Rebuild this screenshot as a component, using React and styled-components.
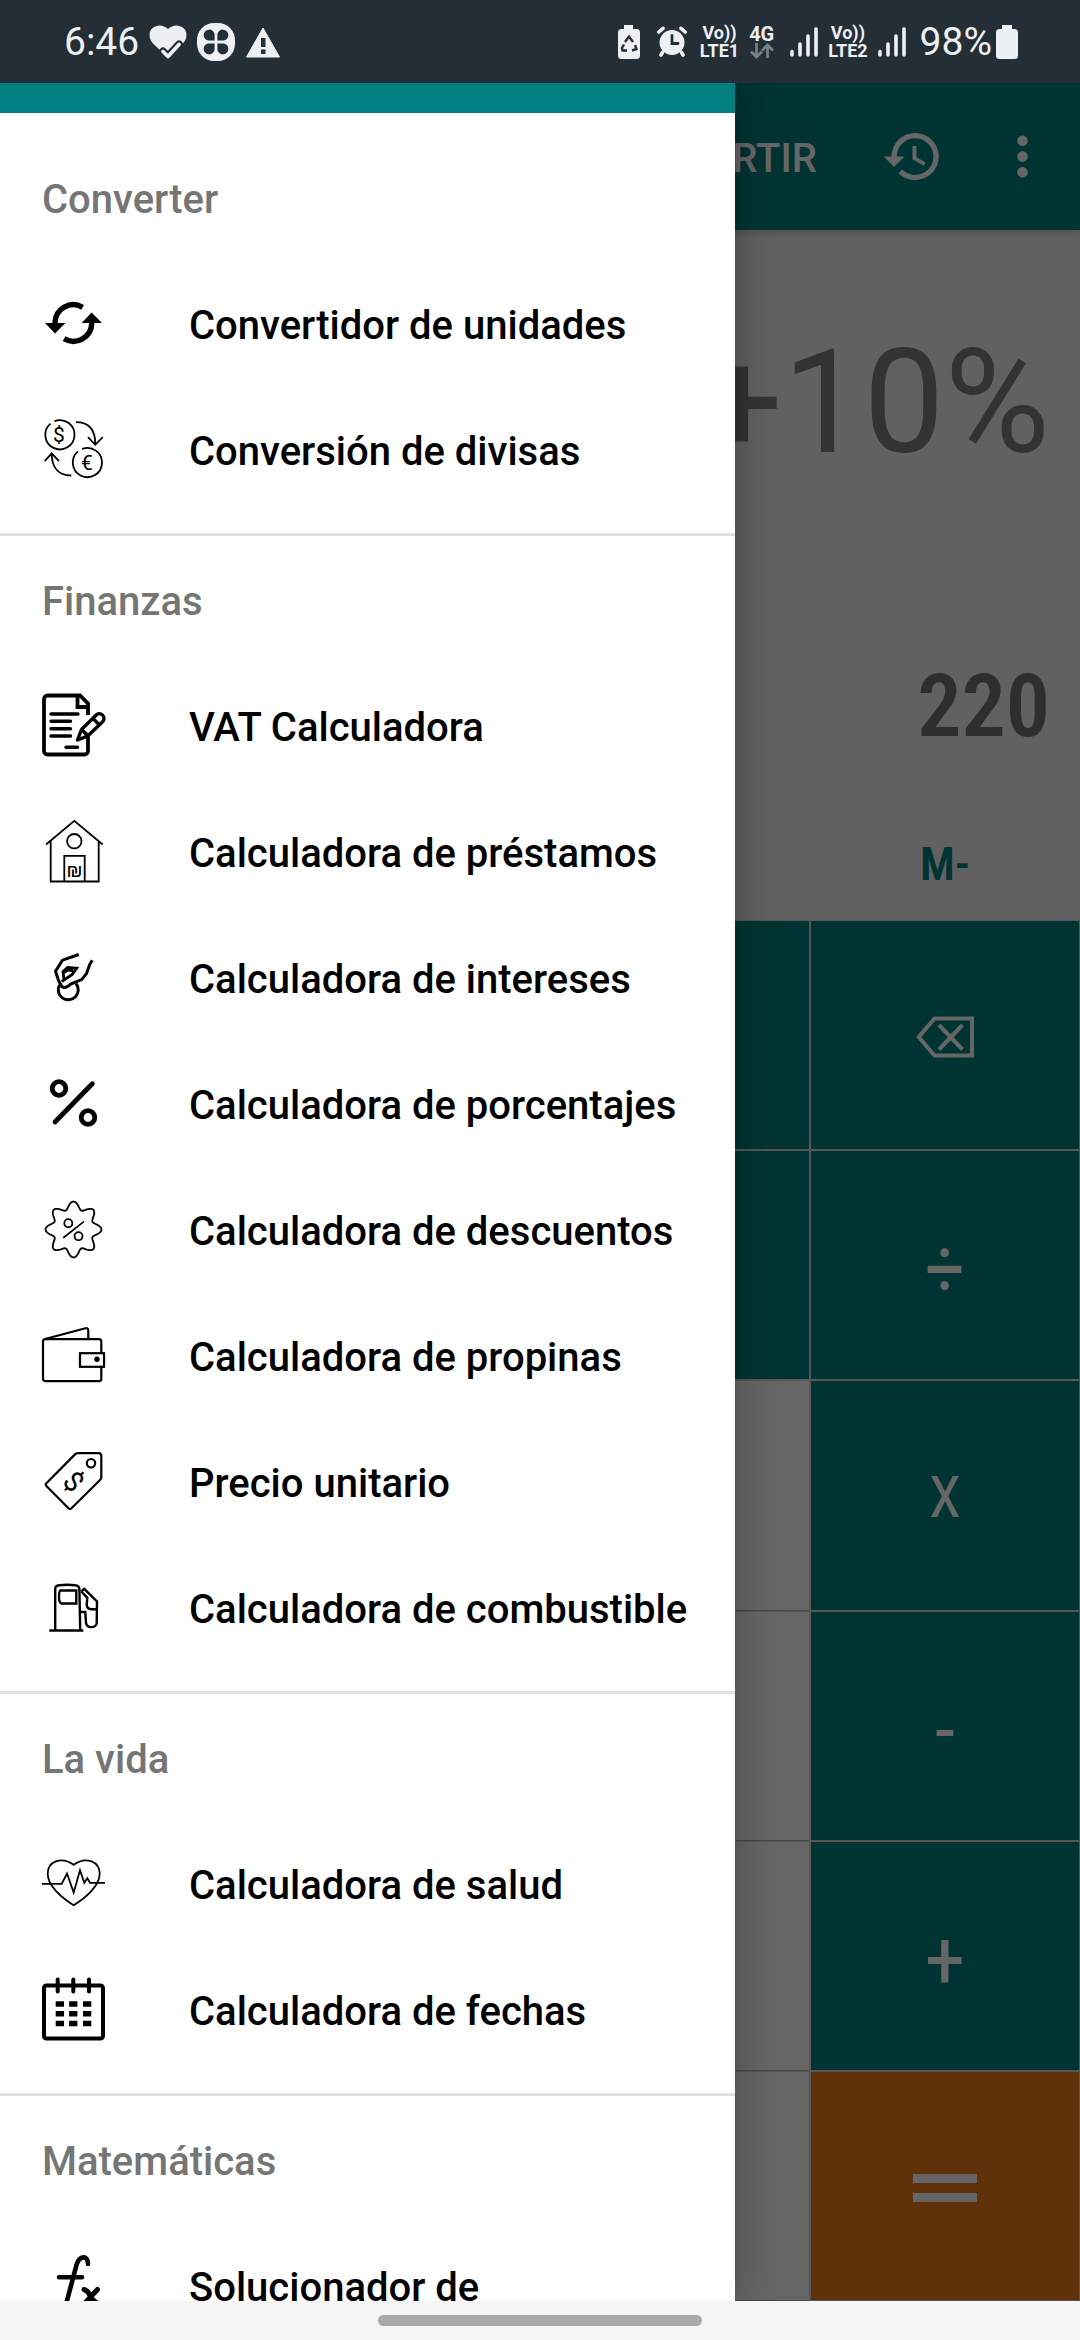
import React from 'react';
import styled, { createGlobalStyle } from 'styled-components';
import { MdHistory, MdMoreVert } from 'react-icons/md';

const IconText = styled.text.withConfig({ shouldForwardProp: (prop) => prop !== 'size' })`
    fill: #000;
    stroke: none;
    text-anchor: middle;
    font-size: ${props => props.size}px;
`

// wavy seal with eight tips
const sealPath = () => {
    const points = [];
    for (let i = 0; i < 96; i++) {
        const angle = (i / 96) * Math.PI * 2;
        const radius = 24.2 + 3.8 * Math.cos(angle * 8);
        points.push(`${(31.5 + radius * Math.sin(angle)).toFixed(2)} ${(31.5 - radius * Math.cos(angle)).toFixed(2)}`);
    }
    return `M${points.join('L')}Z`;
};

const icons = {
    units: (
        <>
            <path d="M13 31a18.3 18.3 0 0 1 27.6-15.7M49.7 31a18.3 18.3 0 0 1-27.6 15.7" strokeWidth="5.4" />
            <path d="M3 31h20.4L13 41.4zM39.6 31H60L49.6 20.6z" fill="#000" stroke="none" />
        </>
    ),
    currency: (
        <>
            <path d="M12.5 3.2a14.6 14.6 0 1 1-4 2.4M40 31a14.6 14.6 0 1 1-4 2.4" strokeWidth="1.8" />
            <path d="M34 4.2c12 0 19.3 7 19.3 22M46 19.2l7.3 7.6 7.4-7.6" strokeWidth="1.8" />
            <path d="M29.3 57.5c-12 0-19.6-7-19.6-22M2.7 43.2l7-7.8 7.3 7.8" strokeWidth="1.8" />
            <IconText x="17" y="24" size={21}>$</IconText>
            <IconText x="45" y="52" size={21}>€</IconText>
        </>
    ),
    vat: (
        <>
            <path d="M46 38v19a3.5 3.5 0 0 1-3.5 3.5h-37A3.5 3.5 0 0 1 2 57V5a3.5 3.5 0 0 1 3.5-3.5H38l8 8V21M35.5 2v11H46" strokeWidth="3.8" />
            <path d="M9 20h27M9 27.3h19.5M9 34.7h19.5M9 42h19.5M24 53.2h11.5" strokeWidth="3.4" strokeLinecap="round" />
            <path d="M35.5 46l4-10.5L54 21.2a4.6 4.6 0 0 1 6.6 6.5L46 41.8zM39.5 35.5l6.3 6M51 24.5l6.2 6.2" fill="#fff" strokeWidth="3.4" strokeLinejoin="round" />
        </>
    ),
    loan: (
        <>
            <path d="M4 24.5L32.3.8l28.4 23.7M8.7 21v40.5h48V21M22.3 61.5V35.8h20.4v25.7" strokeWidth="1.8" />
            <circle cx="32.3" cy="21.2" r="7.2" strokeWidth="1.8" />
            <IconText x="32.5" y="56.5" size={20}>₪</IconText>
        </>
    ),
    interest: (
        <>
            <path d="M36.7 8.5l-16.2 5.7-7 11 3 9.3 3.2 6c2 1.6 5 1.6 9-2.5l11-4.4 4.8-6 3.2-9 2.5-4.4" strokeWidth="3" />
            <path d="M22 33.5l-1-8 4.7-4 9 .8-4.5 6.2-10.5 7M21 27l5-3 5 1" strokeWidth="2.8" />
            <path d="M17.5 39a10 10 0 1 0 16.5-1.5" strokeWidth="3" />
        </>
    ),
    percent: (
        <>
            <circle cx="17" cy="16.5" r="6.8" strokeWidth="4.8" />
            <circle cx="46" cy="45.5" r="6.8" strokeWidth="4.8" />
            <path d="M50.3 11.8L13 50" strokeWidth="4.8" strokeLinecap="round" />
        </>
    ),
    discount: (
        <>
            <path d={sealPath()} strokeWidth="1.8" />
            <circle cx="26.3" cy="25.2" r="4" strokeWidth="1.8" />
            <circle cx="36.5" cy="38.2" r="4" strokeWidth="1.8" />
            <path d="M41.5 23.8L21.7 39.5" strokeWidth="1.6" strokeLinecap="round" />
        </>
    ),
    wallet: (
        <>
            <path d="M3 15L43.5 4.3c1.6-.4 2.8.4 2.8 2V15" strokeWidth="2.2" />
            <rect x="1" y="15.2" width="58.3" height="42" rx="2.5" strokeWidth="2.2" />
            <rect x="38" y="29.2" width="24" height="13.6" fill="#fff" strokeWidth="2.2" />
            <circle cx="55" cy="35.2" r="2.7" fill="#000" stroke="none" />
        </>
    ),
    tag: (
        <>
            <path d="M4.4 33.2L33 4.4q1.2-1.2 3-1.2h20.5q2.8 0 2.8 2.8v21q0 1.8-1.3 3L29.5 58.3q-1.5 1.5-3 0L4.4 36q-1.4-1.4 0-2.8z" strokeWidth="2.2" />
            <circle cx="49" cy="13.2" r="4.2" strokeWidth="2.2" />
            <g transform="rotate(45 31.5 31.5)">
                <IconText x="31.5" y="41" size={28}>$</IconText>
            </g>
        </>
    ),
    fuel: (
        <>
            <path d="M13.2 54.5V13c0-2.5 1.5-3.6 4-3.8q8-.8 16 0c2.6.2 4 1.3 4.2 4l.8 41.3M7.3 54.5h34" strokeWidth="2.4" />
            <path d="M18.5 14.5h15.8v13H19.5c-2-.6-2.5-2-2.5-6s0-6.5 1.5-7z" strokeWidth="2.4" />
            <path d="M39.3 15.5l3-2.7L55 25.5 54.7 47c-.2 5-9.7 6-10.7 0l-.7-11H39M39.3 15.5l6 6.3-.6 7.7q1 3.7 4 3.7h5.5" strokeWidth="2.4" />
        </>
    ),
    health: (
        <>
            <path d="M31.7 53.2C20 46 5.7 34 5.7 21.8c0-12 13.3-18 26-9 12.7-9 26-3 26 9 0 12.2-14.3 24.2-26 31.4z" strokeWidth="1.8" />
            <path d="M0 31.8h19.7L25 21.5l6.7 19L38 18.2l4.3 12.6 3-4.6 2.7 4.6h15" strokeWidth="1.8" />
        </>
    ),
    calendar: (
        <>
            <rect x="2" y="7.5" width="59" height="53" rx="2.5" strokeWidth="4" />
            <path d="M15.7 1.5v12M31.3 1.5v12M47 1.5v12" strokeWidth="4" strokeLinecap="round" />
            <path d="M13.7 26H22m5.1 0h8.3m5.6 0h8.3M13.7 35.8H22m5.1 0h8.3m5.6 0h8.3M13.7 45.5H22m5.1 0h8.3m5.6 0h8.3" strokeWidth="5.6" />
        </>
    ),
    equation: (
        <>
            <path d="M46 10c0-9-8.5-9-11.5 1L22 58M17 23.3h23" strokeWidth="4.6" strokeLinecap="round" />
            <path d="M42 35.5q4 1 6 6t7 7.500M55.500 35.500L42 50" strokeWidth="5" strokeLinecap="round" />
        </>
    )
};

const sections = [
    {
        title: 'Converter',
        items: [
            { icon: 'units', label: 'Convertidor de unidades' },
            { icon: 'currency', label: 'Conversión de divisas' }
        ]
    },
    {
        title: 'Finanzas',
        items: [
            { icon: 'vat', label: 'VAT Calculadora' },
            { icon: 'loan', label: 'Calculadora de préstamos' },
            { icon: 'interest', label: 'Calculadora de intereses' },
            { icon: 'percent', label: 'Calculadora de porcentajes' },
            { icon: 'discount', label: 'Calculadora de descuentos' },
            { icon: 'wallet', label: 'Calculadora de propinas' },
            { icon: 'tag', label: 'Precio unitario' },
            { icon: 'fuel', label: 'Calculadora de combustible' }
        ]
    },
    {
        title: 'La vida',
        items: [
            { icon: 'health', label: 'Calculadora de salud' },
            { icon: 'calendar', label: 'Calculadora de fechas' }
        ]
    },
    {
        title: 'Matemáticas',
        items: [
            { icon: 'equation', label: 'Solucionador de' }
        ]
    }
];

const BackspaceIcon = () => (
    <svg width="58" height="42" viewBox="0 0 58 42" fill="none" stroke="#fff" strokeWidth="4">
        <path d="M2.7 21L18.5 2.5H56v37H18.5zM23 9l23.5 24.5M46.5 9L23 33.5" />
    </svg>
);

const EqualsIcon = () => (
    <svg width="64" height="28" viewBox="0 0 64 28" fill="#fff">
        <path d="M0 0h64v9H0zM0 19h64v9H0z" />
    </svg>
);

// last key of every row; the other three columns share the row tone
const keyRows = [
    { tone: 'teal', rest: 'teal', name: 'Borrar', face: <BackspaceIcon /> },
    { tone: 'teal', rest: 'teal', name: 'Dividir', face: '÷', sign: true },
    { tone: 'teal', rest: 'white', name: 'Multiplicar', face: 'X' },
    { tone: 'teal', rest: 'white', name: 'Restar', face: '-', sign: true },
    { tone: 'teal', rest: 'white', name: 'Sumar', face: '+', sign: true },
    { tone: 'orange', rest: 'white', name: 'Igual', face: <EqualsIcon /> }
];

function Signal() {
    return (
        <svg width="28" height="30" viewBox="0 0 28 30" stroke="#eeeff2" strokeWidth="3.6" strokeLinecap="round">
            <path d="M2 24.5V28M10 17v11M18 9v19M26 2v26" />
        </svg>
    );
}

function StatusBar() {
    return (
        <Status>
            <StatusGroup>
                <Clock>6:46</Clock>
                <svg width="38" height="38" viewBox="0 0 38 38">
                    <path d="M19 35L4 20.5C-1 15-.5 7 5 4c5-3 10-1.5 14 2 4-3.5 9-5 14-2 5.5 3 6 11 1 16.5z" fill="#eeeff2" />
                    <path d="M14 28.5l5 5 11-12" fill="none" stroke="#242e36" strokeWidth="8" strokeLinecap="round" strokeLinejoin="round" />
                    <path d="M14 28.5l5 5 11-12" fill="none" stroke="#eeeff2" strokeWidth="3.8" strokeLinecap="round" strokeLinejoin="round" />
                </svg>
                <svg width="38" height="38" viewBox="0 0 38 38">
                    <rect x="0" y="0" width="38" height="38" rx="17" fill="#eeeff2" />
                    <path d="M17.6 17.6v-6a5.5 5.5 0 1 0-6 6zM20.4 17.6v-6a5.5 5.5 0 1 1 6 6zM17.6 20.4v6a5.5 5.5 0 1 1-6-6zM20.4 20.4v6a5.5 5.5 0 1 0 6-6z" fill="#242e36" />
                </svg>
                <svg width="36" height="32" viewBox="0 0 36 32">
                    <path d="M18 2l16.5 29h-33z" fill="#eeeff2" stroke="#eeeff2" strokeLinejoin="round" />
                    <path d="M16 12h4.5v9H16zM16 23.5h4.5V28H16z" fill="#242e36" />
                </svg>
            </StatusGroup>
            <StatusGroup>
                <svg width="29" height="34" viewBox="0 0 29 34">
                    <path d="M6 0h9v4h3.5Q22 4 22 7.5v23q0 3.5-3.5 3.5h-15Q0 34 0 30.5v-23Q0 4 3.5 4H6z" fill="#eeeff2" />
                    <path d="M7 17l4-5.5 4 5.5M17 20l1.5 4-4.5 1.5M9 25.5H4.5L4 23l2-3.5" fill="none" stroke="#242e36" strokeWidth="2.4" />
                </svg>
                <svg width="33" height="31" viewBox="0 0 33 31" stroke="#eeeff2" strokeLinecap="round">
                    <circle cx="15" cy="16.5" r="12.5" fill="#eeeff2" stroke="none" />
                    <path d="M1.8 6L6 2.3M28.2 6L24 2.3M5.5 26.5L4 29M24.5 26.5L26 29" strokeWidth="3.6" />
                    <path d="M15 9.5v8h6" fill="none" stroke="#242e36" strokeWidth="2.8" />
                </svg>
                <Network>
                    <span>Vo))</span>
                    <span>LTE1</span>
                </Network>
                <DataNetwork>
                    <span>4G</span>
                    <svg width="24" height="16" viewBox="0 0 24 16" fill="none" stroke="#78818a" strokeWidth="2.8">
                        <path d="M6.5 0v13M1 8.5L6.5 14 12 8.5M17.5 15V2M12 7.5L17.5 2 23 7.5" />
                    </svg>
                </DataNetwork>
                <Signal />
                <Network>
                    <span>Vo))</span>
                    <span>LTE2</span>
                </Network>
                <Signal />
                <Battery>
                    <Clock>98%</Clock>
                    <svg width="22" height="34" viewBox="0 0 22 34">
                        <path d="M6 0h10v4h2.5Q22 4 22 7.5v23q0 3.5-3.5 3.5h-15Q0 34 0 30.5v-23Q0 4 3.5 4H6z" fill="#eeeff2" />
                    </svg>
                </Battery>
            </StatusGroup>
        </Status>
    );
}

function Calculator() {
    return (
        <Screen>
            <Toolbar>
                <ConvertButton>CONVERTIR</ConvertButton>
                <ToolButtons>
                    <IconButton aria-label="Historial"><MdHistory /></IconButton>
                    <IconButton aria-label="Más opciones"><MdMoreVert /></IconButton>
                </ToolButtons>
            </Toolbar>
            <Display>
                <Expression>+10%</Expression>
                <Result>220</Result>
            </Display>
            <MemoryRow>
                <MemoryButton>M-</MemoryButton>
            </MemoryRow>
            <Keypad>
                {keyRows.map((row) => (
                    <React.Fragment key={row.name}>
                        <Key tone={row.rest} tabIndex={-1} />
                        <Key tone={row.rest} tabIndex={-1} />
                        <Key tone={row.rest} tabIndex={-1} />
                        <Key tone={row.tone} sign={row.sign} aria-label={row.name}>{row.face}</Key>
                    </React.Fragment>
                ))}
            </Keypad>
        </Screen>
    );
}

function Drawer() {
    return (
        <DrawerPanel>
            <DrawerHeader />
            {sections.map((section) => (
                <Section key={section.title}>
                    <SectionTitle>{section.title}</SectionTitle>
                    <List>
                        {section.items.map((item) => (
                            <li key={item.label}>
                                <MenuLink href="#">
                                    <MenuIcon viewBox="0 0 63 63">{icons[item.icon]}</MenuIcon>
                                    <MenuLabel>{item.label}</MenuLabel>
                                </MenuLink>
                            </li>
                        ))}
                    </List>
                </Section>
            ))}
        </DrawerPanel>
    );
}

function App() {
    return (
        <Phone>
            <GlobalStyle />
            <StatusBar />
            <Content>
                <Calculator />
                <Scrim />
                <Drawer />
            </Content>
            <NavBar>
                <Handle />
            </NavBar>
        </Phone>
    );
}

export default App;

const GlobalStyle = createGlobalStyle`
    * {
        box-sizing: border-box;
    }
    body {
        margin: 0;
        font-family: Roboto, "Noto Sans", sans-serif;
    }
    button {
        margin: 0;
        padding: 0;
        border: 0;
        background: none;
        font-family: inherit;
        cursor: pointer;
    }
`

const Phone = styled.div`
    height: 100vh;
    display: flex;
    flex-direction: column;
    overflow: hidden;
`

const Status = styled.header`
    flex: none;
    height: 83px;
    padding: 0 62px 0 64px;
    display: flex;
    justify-content: space-between;
    align-items: center;
    background: #242e36;
    color: #eeeff2;
`

const StatusGroup = styled.div`
    display: flex;
    align-items: center;
    gap: 10px;
`

const Battery = styled.div`
    padding-left: 4px;
    display: flex;
    align-items: center;
    gap: 4px;
`

const Clock = styled.span`
    font-size: 39px;
    line-height: 46px;
`

const Network = styled.div`
    display: flex;
    flex-direction: column;
    align-items: center;
    font-size: 18px;
    font-weight: 700;
    line-height: 18px;
`

const DataNetwork = styled(Network)`
    padding-right: 6px;
    font-size: 20px;
`

const Content = styled.div`
    flex: 1;
    min-height: 0;
    position: relative;
    overflow: hidden;
`

const Screen = styled.main`
    height: 100%;
    display: flex;
    flex-direction: column;
    background: #f3f3f3;
`

const Toolbar = styled.div`
    flex: none;
    height: 147px;
    padding-right: 26px;
    display: flex;
    justify-content: flex-end;
    align-items: center;
    gap: 64px;
    background: #008080;
    box-shadow: 0 2px 8px rgba(0, 0, 0, 0.2);
`

const ConvertButton = styled.button`
    color: #fff;
    font-size: 40px;
    font-weight: 500;
    line-height: 46px;
    padding-top: 4px;
`

const ToolButtons = styled.div`
    display: flex;
    gap: 47px;
`

const IconButton = styled.button`
    display: flex;
    color: #fff;
    font-size: 63px;
`

const Display = styled.div`
    flex: 1;
    min-height: 0;
    padding: 88px 30px 0;
    display: flex;
    flex-direction: column;
    align-items: flex-end;
    gap: 166px;
`

const Expression = styled.div`
    color: #808080;
    font-size: 144px;
    line-height: 170px;
`

const Result = styled.div`
    color: #747474;
    font-family: "Roboto Condensed", Roboto, sans-serif;
    font-size: 88px;
    font-weight: 600;
    line-height: 104px;
`

const MemoryRow = styled.div`
    flex: none;
    display: flex;
    justify-content: flex-end;
`

const MemoryButton = styled.button`
    width: 25%;
    height: 112px;
    color: #008080;
    font-family: "Roboto Condensed", Roboto, sans-serif;
    font-size: 46px;
    font-weight: 600;
`

const Keypad = styled.div`
    flex: none;
    height: 60vh;
    max-height: 1381px;
    display: grid;
    grid-template-columns: repeat(4, 1fr);
    grid-auto-rows: 1fr;
    gap: 2px;
    padding: 1px;
    background: #d6dcdc;
`

const tones = {
    teal: '#008080',
    orange: '#f27b19',
    white: '#ffffff'
};

const Key = styled.button.withConfig({ shouldForwardProp: (prop) => prop !== 'tone' && prop !== 'sign' })`
    min-height: 0;
    padding-top: ${props => props.sign ? 8 : 4}px;
    display: flex;
    justify-content: center;
    align-items: center;
    background: ${props => tones[props.tone]};
    box-shadow: ${props => props.tone === 'white' ? '0 1px 0 #b4b4b4' : 'none'};
    color: #fff;
    font-family: "Roboto Condensed", Roboto, sans-serif;
    font-size: ${props => props.sign ? 82 : 58}px;
    font-weight: 400;
`

const Scrim = styled.div`
    position: absolute;
    inset: 0;
    background: rgba(0, 0, 0, 0.6);
`

const DrawerPanel = styled.nav`
    position: absolute;
    top: 0;
    bottom: 0;
    left: 0;
    width: 735px;
    max-width: 85%;
    overflow: hidden;
    background: #fff;
    box-shadow: 0 0 40px rgba(0, 0, 0, 0.3);
`

const DrawerHeader = styled.div`
    height: 30px;
    margin-bottom: 21px;
    background: #008080;
`

const Section = styled.section`
    & + & {
        margin-top: 21px;
        border-top: 3px solid #e0e0e0;
    }
`

const SectionTitle = styled.h2`
    margin: 0;
    padding: 6px 42px 0;
    height: 126px;
    color: #757575;
    font-size: 40px;
    font-weight: 500;
    line-height: 120px;
`

const List = styled.ul`
    margin: 0;
    padding: 0;
    list-style: none;
`

const MenuLink = styled.a`
    height: 126px;
    padding: 0 42px;
    display: flex;
    align-items: center;
    gap: 84px;
    color: #000;
    text-decoration: none;
`

const MenuIcon = styled.svg`
    flex: none;
    width: 63px;
    height: 63px;
    overflow: visible;
    fill: none;
    stroke: #000;
`

const MenuLabel = styled.span`
    padding-top: 6px;
    font-size: 40px;
    font-weight: 500;
    line-height: 48px;
    white-space: nowrap;
`

const NavBar = styled.footer`
    flex: none;
    height: 39px;
    display: flex;
    justify-content: center;
    align-items: center;
    background: #f5f5f5;
`

const Handle = styled.div`
    width: 30%;
    height: 11px;
    border-radius: 6px;
    background: #a9a9a9;
`
